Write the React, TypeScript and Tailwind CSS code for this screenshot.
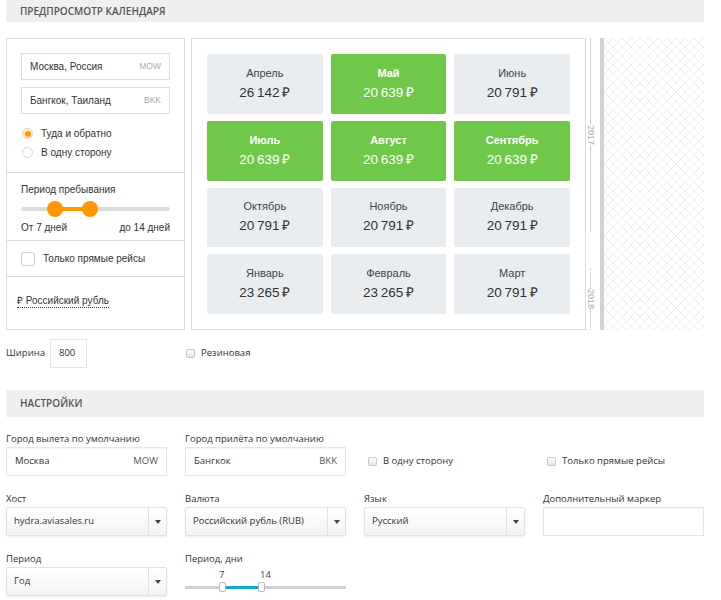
import React from 'react'

const months = [
  { name: 'Апрель', price: '26\u2009142', hot: false },
  { name: 'Май', price: '20\u2009639', hot: true },
  { name: 'Июнь', price: '20\u2009791', hot: false },
  { name: 'Июль', price: '20\u2009639', hot: true },
  { name: 'Август', price: '20\u2009639', hot: true },
  { name: 'Сентябрь', price: '20\u2009639', hot: true },
  { name: 'Октябрь', price: '20\u2009791', hot: false },
  { name: 'Ноябрь', price: '20\u2009791', hot: false },
  { name: 'Декабрь', price: '20\u2009791', hot: false },
  { name: 'Январь', price: '23\u2009265', hot: false },
  { name: 'Февраль', price: '23\u2009265', hot: false },
  { name: 'Март', price: '20\u2009791', hot: false },
]

function CityInput({ city, code }: { city: string; code: string }) {
  return (
    <div className="h-[27px] border border-[#dedede] flex items-center justify-between px-[8px]">
      <span className="text-[10px] text-[#333]">{city}</span>
      <span className="text-[8.5px] text-[#aaa]">{code}</span>
    </div>
  )
}

function SidePanel() {
  return (
    <div className="w-[179px] border border-[#dcdcdc] flex flex-col [font-family:'Liberation_Sans',Arial,sans-serif] text-[#333]">
      <div className="px-[14px] pt-[14px] pb-[14px]">
        <CityInput city="Москва, Россия" code="MOW" />
        <div className="mt-[7px]">
          <CityInput city="Бангкок, Таиланд" code="BKK" />
        </div>
        <div className="mt-[14px] flex flex-col gap-[8px] pl-[1px]">
          <label className="h-[11px] flex items-center gap-[8px] text-[10px] leading-[11px]">
            <span className="w-[11px] h-[11px] rounded-full border border-[#f4cf9b] bg-[#fff1dc] flex items-center justify-center">
              <span className="w-[6px] h-[6px] rounded-full bg-[#ff9800]" />
            </span>
            Туда и обратно
          </label>
          <label className="h-[11px] flex items-center gap-[8px] text-[10px] leading-[11px]">
            <span className="w-[11px] h-[11px] rounded-full border border-[#d8d8d8] bg-white" />
            В одну сторону
          </label>
        </div>
      </div>
      <div className="border-t border-[#dcdcdc] px-[14px] pt-[10px] h-[68px]">
        <div className="text-[10px] leading-[14px]">Период пребывания</div>
        <div className="relative h-[16px] mt-[4px]">
          <div className="absolute left-0 right-0 top-[6px] h-[4px] bg-[#dcdcdc] rounded" />
          <div className="absolute left-[34px] w-[35px] top-[6px] h-[4px] bg-[#ff9800]" />
          <div className="absolute left-[26px] top-0 w-[16px] h-[16px] rounded-full bg-[#ff9800]" />
          <div className="absolute left-[61px] top-0 w-[16px] h-[16px] rounded-full bg-[#ff9800]" />
        </div>
        <div className="flex justify-between text-[10px] leading-[14px] mt-[4px]">
          <span>От 7 дней</span>
          <span>до 14 дней</span>
        </div>
      </div>
      <div className="border-t border-[#dcdcdc] h-[36px] px-[14px] flex items-center gap-[8px] text-[10px]">
        <span className="w-[14px] h-[14px] rounded-[2px] border border-[#d0d0d0] bg-white" />
        Только прямые рейсы
      </div>
      <div className="border-t border-[#dcdcdc] flex-1 px-[10px] pt-[10px]">
        <span className="text-[10px] leading-[14px] border-b border-dotted border-[#333] pb-[1px]">₽ Российский рубль</span>
      </div>
    </div>
  )
}

function Calendar() {
  return (
    <div className="w-[395px] border border-[#dcdcdc] p-[15px] [font-family:'Liberation_Sans',Arial,sans-serif]">
      <div className="grid grid-cols-3 grid-rows-4 gap-x-[8px] gap-y-[7px] h-full">
        {months.map((m) => (
          <div
            key={m.name}
            className={`rounded-[2px] flex flex-col items-center justify-center ${
              m.hot ? 'bg-[#6fc84a] text-white' : 'bg-[#eaedf0] text-[#333]'
            }`}
          >
            <span className={`text-[11px] leading-[14px] ${m.hot ? 'font-bold' : 'text-[#444]'}`}>{m.name}</span>
            <span className="text-[13.5px] leading-[18px] mt-[4px]">{m.price}{'\u2009'}₽</span>
          </div>
        ))}
      </div>
    </div>
  )
}

function Timeline() {
  return (
    <div className="w-[14px] flex flex-col items-center pr-[5px] [font-family:'Liberation_Sans',Arial,sans-serif]">
      <div className="h-[194px] flex flex-col items-center">
        <div className="flex-1 w-px bg-[#d0d0d0]" />
        <span className="[writing-mode:vertical-rl] text-[9px] leading-[9px] text-[#aaa] py-[3px]">2017</span>
        <div className="flex-1 w-px bg-[#d0d0d0]" />
      </div>
      <div className="h-[36px]" />
      <div className="flex-1 flex flex-col items-center">
        <div className="flex-1 border-l border-dotted border-[#bbb]" />
        <span className="[writing-mode:vertical-rl] text-[9px] leading-[9px] text-[#aaa] py-[3px]">2018</span>
        <div className="flex-1 border-l border-dotted border-[#bbb]" />
      </div>
    </div>
  )
}

function Hatch() {
  return (
    <div className="flex-1">
      <svg width="100%" height="100%">
        <defs>
          <pattern id="hatch" width="9" height="9" patternUnits="userSpaceOnUse">
            <path d="M0 0L9 9M9 0L0 9" stroke="#ececec" strokeWidth="1" />
          </pattern>
        </defs>
        <rect width="100%" height="100%" fill="url(#hatch)" />
      </svg>
    </div>
  )
}

function SmallCheck({ label }: { label: string }) {
  return (
    <label className="flex items-center gap-[6px] text-[9.5px] text-[#333]">
      <span className="w-[9px] h-[9px] rounded-[2px] border border-[#c8c8c8] bg-gradient-to-b from-white to-[#e4e4e4]" />
      {label}
    </label>
  )
}

function Field({ label, children }: { label?: string; children: React.ReactNode }) {
  return (
    <div className="flex flex-col">
      <div className="h-[15px] text-[9.5px] leading-[14px] text-[#333]">{label}</div>
      {children}
    </div>
  )
}

function TextBox({ value, code }: { value?: string; code?: string }) {
  return (
    <div className="h-[29px] border border-[#e6e6e6] shadow-[inset_0_1px_1px_rgba(0,0,0,0.04)] flex items-center justify-between px-[8px] text-[9.5px] text-[#333]">
      <span>{value}</span>
      <span className="text-[#555]">{code}</span>
    </div>
  )
}

function Select({ value }: { value: string }) {
  return (
    <div className="h-[29px] border border-[#e2e2e2] rounded-[2px] shadow-[0_1px_2px_rgba(0,0,0,0.08)] bg-gradient-to-b from-white to-[#f4f4f4] flex items-stretch text-[9.5px] text-[#333]">
      <span className="flex-1 flex items-center px-[7px]">{value}</span>
      <span className="w-[18px] border-l border-[#e2e2e2] flex items-center justify-center">
        <svg width="6" height="4" viewBox="0 0 6 4">
          <path d="M0 0H6L3 4Z" fill="#444" />
        </svg>
      </span>
    </div>
  )
}

function PeriodSlider() {
  return (
    <div className="relative h-[29px]">
      <span className="absolute left-[34px] top-[1px] text-[9.5px] text-[#444]">7</span>
      <span className="absolute left-[75px] top-[1px] text-[9.5px] text-[#444]">14</span>
      <div className="absolute left-0 right-0 top-[19px] h-[3px] bg-[#cfcfcf]" />
      <div className="absolute left-[38px] w-[38px] top-[19px] h-[3px] bg-[#12a9c9]" />
      <div className="absolute left-[34px] top-[15px] w-[7px] h-[10px] rounded-[2px] border border-[#bbb] bg-white" />
      <div className="absolute left-[73px] top-[15px] w-[7px] h-[10px] rounded-[2px] border border-[#bbb] bg-white" />
    </div>
  )
}

export default function App() {
  return (
    <div className="w-[721px] h-[600px] overflow-hidden bg-white [font-family:'Open_Sans',sans-serif]">
      <div className="ml-[6px] w-[698px]">
        <div className="h-[22px] bg-[#efefef] pl-[14px] flex items-center text-[10px] font-semibold text-[#555] uppercase">
          Предпросмотр календаря
        </div>

        <div className="mt-[16px] h-[292px] flex">
          <SidePanel />
          <div className="w-[6px]" />
          <Calendar />
          <Timeline />
          <div className="w-[4px] bg-[#d2d2d2]" />
          <Hatch />
        </div>

        <div className="mt-[9px] flex items-center h-[29px]">
          <span className="w-[44px] text-[9.5px] text-[#333]">Ширина</span>
          <div className="w-[37px] h-[29px] border border-[#e6e6e6] flex items-center px-[8px] text-[9.5px] text-[#333]">800</div>
          <div className="ml-[99px]">
            <SmallCheck label="Резиновая" />
          </div>
        </div>

        <div className="mt-[22px] h-[27px] bg-[#efefef] pl-[14px] flex items-center text-[10px] font-semibold text-[#555] uppercase">
          Настройки
        </div>

        <div className="mt-[15px] grid grid-cols-4 gap-x-[18px] gap-y-[16px]">
          <Field label="Город вылета по умолчанию">
            <TextBox value="Москва" code="MOW" />
          </Field>
          <Field label="Город прилёта по умолчанию">
            <TextBox value="Бангкок" code="BKK" />
          </Field>
          <Field>
            <div className="h-[29px] flex items-center pl-[4px]">
              <SmallCheck label="В одну сторону" />
            </div>
          </Field>
          <Field>
            <div className="h-[29px] flex items-center pl-[4px]">
              <SmallCheck label="Только прямые рейсы" />
            </div>
          </Field>

          <Field label="Хост">
            <Select value="hydra.aviasales.ru" />
          </Field>
          <Field label="Валюта">
            <Select value="Российский рубль (RUB)" />
          </Field>
          <Field label="Язык">
            <Select value="Русский" />
          </Field>
          <Field label="Дополнительный маркер">
            <TextBox />
          </Field>

          <Field label="Период">
            <Select value="Год" />
          </Field>
          <Field label="Период, дни">
            <PeriodSlider />
          </Field>
        </div>
      </div>
    </div>
  )
}
